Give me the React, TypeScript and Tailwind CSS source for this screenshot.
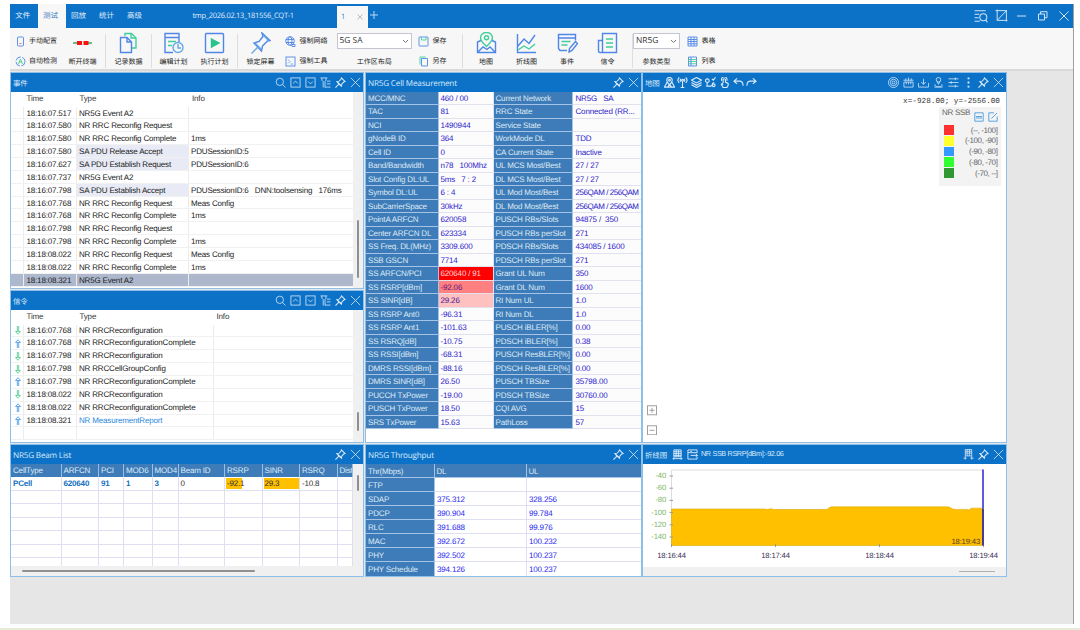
import type { ReactNode } from 'react';
import { clsx } from 'clsx';

const ICONS = {
  search: <><circle cx="10.5" cy="10.5" r="8" /><path d="M16.5 16.5 23 23" /></>,
  up: <><rect x="2" y="2" width="20" height="20" /><path d="m7 14 5-5 5 5" /></>,
  down: <><rect x="2" y="2" width="20" height="20" /><path d="m7 10 5 5 5-5" /></>,
  filter: <path d="M1 2h15M4 2v5l3 3v13M13 2v5l-2 3v13M15 9h8M15 15h8M11 22h12" />,
  pin: <><path d="m14 2 8 8-3 1-4 4-1 5L4 10l5-1 4-4z" /><path d="m9 15-8 8" /><path d="m5 11 8 8" /></>,
  close: <path d="M2 2 22 22M22 2 2 22" />,
  map: <><path d="M7 11 1 22h22L17 11M8 22l4-6 5 6" /><path d="M12 17S6 11 6 7a6 6 0 0 1 12 0c0 4-6 10-6 10z" /><circle cx="12" cy="7" r="2" /></>,
  antenna: <><path d="M5 1C1 5 1 9 5 13M19 1c4 4 4 8 0 12M8.500 4c-2 2-2 4 0 6M15.500 4c2 2 2 4 0 6" /><circle cx="12" cy="7" r="2" /><path d="M12 9v14M8 23h8" /></>,
  layers: <path d="m12 1 11 6-11 6L1 7zM1 12l11 6 11-6M1 17l11 6 11-6" />,
  route: <><circle cx="5" cy="8" r="4" /><path d="m5 12-1 8h9c5 0 1-8 7-8M15 4l3 3 5-6" /><circle cx="19" cy="18" r="3" /></>,
  hand: <path d="M9 13V5a3 3 0 0 1 5 0v6l6 3v4l-3 5H9l-4-7 2-2 2 3M6 8a6 6 0 1 1 11 0" />,
  undo: <path d="M9 3 2 9l7 6M2 9h12c6 0 8 4 8 10" />,
  redo: <path d="m15 3 7 6-7 6M22 9H10C4 9 2 13 2 19" />,
  target: <><circle cx="12" cy="12" r="11" /><circle cx="12" cy="12" r="7" /><circle cx="12" cy="12" r="3" /></>,
  ruler: <path d="M2 11h20v11H2zM1 7h22M6 3v5M12 1v7M18 3v5M7 11v5M12 11v5M17 11v5" />,
  download: <path d="M1 13v9h22v-9M12 4v12M7 11l5 5 5-5" />,
  locate: <><circle cx="12" cy="6" r="5" /><path d="m9 10 3 6 3-6M5 16c-6 7 20 7 14 0M3 22h18" /></>,
  sliders: <path d="M1 4h22M1 12h22M1 20h22M16 1v6M7 9v6M16 17v6" />,
  dots: <path d="M12 1v4M12 10v4M12 19v4" strokeWidth="4" />,
  grid: <path d="M4 2h16v15H4zM4 6h16M4 10h16M4 14h16M9 2v15M14 2v15M2 21h20M5 18l-3 3 3 2M19 18l3 3-3 2" />,
  swap: <path d="M22 9V2H2v20h20v-5M2 8h20M7 5h4M8 14h15M19 11l4 3-4 3" />,
  cursorGrid: <path d="M5 1h14v14H5zM5 5h14M5 9h14M9 1v14M14 1v14M5 15v8M19 15v8M1 20h7M16 20h7" />,
  listSearch: <><path d="M1 3h19M1 9h8M1 15h7M1 21h9" /><circle cx="16" cy="14" r="6" /><path d="m20 19 3 4" /></>,
  crop: <path d="M1 3h20v20M4 1v20h19M4 21 22 2" />,
};

type IconName = keyof typeof ICONS;

function Icon({ name, size = 11, w = 2 }: { name: IconName; size?: number; w?: number }) {
  return (
    <svg width={size} height={size} viewBox="0 0 24 24" fill="none" stroke="currentColor" strokeWidth={w} className="shrink-0">
      {ICONS[name]}
    </svg>
  );
}

function Panel({ title, left, icons, className, children }: {
  title: string;
  left?: ReactNode;
  icons: IconName[];
  className: string;
  children: ReactNode;
}) {
  return (
    <section className={clsx('flex flex-col overflow-hidden border border-[#8dbfe8] bg-white', className)}>
      <header className="flex h-[18.5px] shrink-0 items-center bg-[#0c72c8] pl-[2px] pr-[2px] text-[#dcebf9]">
        <h2 className={clsx(
          "whitespace-nowrap pt-[3.5px] font-['Open_Sans','Noto_Sans_CJK_SC',sans-serif] leading-[12px]",
          title.startsWith('NR') ? 'text-[8.1px]' : 'text-[7.5px]',
        )}
        >
          {title}
        </h2>
        {left}
        <div className="ml-auto flex items-center gap-[4px]">
          {icons.map((name) => <Icon key={name} name={name} w={name === 'pin' ? 2.2 : 1.7} />)}
        </div>
      </header>
      {children}
    </section>
  );
}

const EVENTS: [string, string, string][] = [
  ['18:16:07.517', 'NR5G Event A2', ''],
  ['18:16:07.580', 'NR RRC Reconfig Request', ''],
  ['18:16:07.580', 'NR RRC Reconfig Complete', '1ms'],
  ['18:16:07.580', 'SA PDU Release Accept', 'PDUSessionID:5'],
  ['18:16:07.627', 'SA PDU Establish Request', 'PDUSessionID:6'],
  ['18:16:07.737', 'NR5G Event A2', ''],
  ['18:16:07.798', 'SA PDU Establish Accept', 'PDUSessionID:6   DNN:toolsensing   176ms'],
  ['18:16:07.768', 'NR RRC Reconfig Request', 'Meas Config'],
  ['18:16:07.768', 'NR RRC Reconfig Complete', '1ms'],
  ['18:16:07.798', 'NR RRC Reconfig Request', ''],
  ['18:16:07.798', 'NR RRC Reconfig Complete', '1ms'],
  ['18:18:08.022', 'NR RRC Reconfig Request', 'Meas Config'],
  ['18:18:08.022', 'NR RRC Reconfig Complete', '1ms'],
  ['18:18:08.321', 'NR5G Event A2', ''],
];

const SIGNALS: ['down' | 'up', string, string][] = [
  ['down', '18:16:07.768', 'NR RRCReconfiguration'],
  ['up', '18:16:07.768', 'NR RRCReconfigurationComplete'],
  ['down', '18:16:07.798', 'NR RRCReconfiguration'],
  ['down', '18:16:07.798', 'NR RRCCellGroupConfig'],
  ['up', '18:16:07.798', 'NR RRCReconfigurationComplete'],
  ['down', '18:18:08.022', 'NR RRCReconfiguration'],
  ['up', '18:18:08.022', 'NR RRCReconfigurationComplete'],
  ['up', '18:18:08.321', 'NR MeasurementReport'],
];

const CELL: [string, string, string, string][] = [
  ['MCC/MNC', '460 / 00', 'Current Network', 'NR5G   SA'],
  ['TAC', '81', 'RRC State', 'Connected (RR...'],
  ['NCI', '1490944', 'Service State', ''],
  ['gNodeB ID', '364', 'WorkMode DL', 'TDD'],
  ['Cell ID', '0', 'CA Current State', 'Inactive'],
  ['Band/Bandwidth', 'n78   100Mhz', 'UL MCS Most/Best', '27 / 27'],
  ['Slot Config DL:UL', '5ms   7 : 2', 'DL MCS Most/Best', '27 / 27'],
  ['Symbol DL:UL', '6 : 4', 'UL Mod Most/Best', '256QAM / 256QAM'],
  ['SubCarrierSpace', '30kHz', 'DL Mod Most/Best', '256QAM / 256QAM'],
  ['PointA ARFCN', '620058', 'PUSCH RBs/Slots', '94875 /  350'],
  ['Center ARFCN DL', '623334', 'PUSCH RBs perSlot', '271'],
  ['SS Freq. DL(MHz)', '3309.600', 'PDSCH RBs/Slots', '434085 / 1600'],
  ['SSB GSCN', '7714', 'PDSCH RBs perSlot', '271'],
  ['SS ARFCN/PCI', '620640 / 91', 'Grant UL Num', '350'],
  ['SS RSRP[dBm]', '-92.06', 'Grant DL Num', '1600'],
  ['SS SINR[dB]', '29.26', 'RI Num UL', '1.0'],
  ['SS RSRP Ant0', '-96.31', 'RI Num DL', '1.0'],
  ['SS RSRP Ant1', '-101.63', 'PUSCH iBLER[%]', '0.00'],
  ['SS RSRQ[dB]', '-10.75', 'PDSCH iBLER[%]', '0.38'],
  ['SS RSSI[dBm]', '-68.31', 'PUSCH ResBLER[%]', '0.00'],
  ['DMRS RSSI[dBm]', '-88.16', 'PDSCH ResBLER[%]', '0.00'],
  ['DMRS SINR[dB]', '26.50', 'PUSCH TBSize', '35798.00'],
  ['PUCCH TxPower', '-19.00', 'PDSCH TBSize', '30760.00'],
  ['PUSCH TxPower', '18.50', 'CQI AVG', '15'],
  ['SRS TxPower', '15.63', 'PathLoss', '57'],
];

const CELL_BG: Record<string, string> = {
  'SS ARFCN/PCI': 'bg-[#ff0000] text-[#ffd8d8]',
  'SS RSRP[dBm]': 'bg-[#ff8080] text-[#5a1a80]',
  'SS SINR[dB]': 'bg-[#ffc0c0] text-[#4a2090]',
};

const THROUGHPUT: [string, string, string][] = [
  ['FTP', '', ''],
  ['SDAP', '375.312', '328.256'],
  ['PDCP', '390.904', '99.784'],
  ['RLC', '391.688', '99.976'],
  ['MAC', '392.672', '100.232'],
  ['PHY', '392.502', '100.237'],
  ['PHY Schedule', '394.126', '100.237'],
];

const LEGEND: [string, string][] = [
  ['bg-[#ff3030]', '(--, -100]'],
  ['bg-[#ffff30]', '(-100, -90]'],
  ['bg-[#3399ff]', '(-90, -80]'],
  ['bg-[#30ff30]', '(-80, -70]'],
  ['bg-[#309830]', '(-70, --]'],
];

const LOG_ICONS: IconName[] = ['search', 'up', 'down', 'filter', 'pin', 'close'];

function Arrow({ dir }: { dir: 'down' | 'up' }) {
  return dir === 'down' ? (
    <svg width="6" height="9" viewBox="0 0 6 9" fill="none" stroke="#6fd3a4" strokeWidth="1">
      <path d="M2.300 0v5M3.700 0v5M.5 5.500h5L3 8.300z" />
    </svg>
  ) : (
    <svg width="6" height="9" viewBox="0 0 6 9" fill="none" stroke="#65a9e8" strokeWidth="1">
      <path d="M.5 3.500h5L3 .7zM2.300 4v5M3.700 4v5" />
    </svg>
  );
}

function EventPanel() {
  const cols = 'grid grid-cols-[12.5px_53px_112.500px_163.5px]';
  return (
    <Panel title="事件" icons={LOG_ICONS} className="h-[217px]">
      <div className="relative flex min-h-0 flex-1 text-[#222]">
        <div className="w-[341.5px]">
          <div className={clsx(cols, 'h-[15px] items-center text-[#383838]')}>
            <span /><span className="pl-[3px]">Time</span><span className="pl-[3px]">Type</span><span className="pl-[3px]">Info</span>
          </div>
          {EVENTS.map(([time, type, info], i) => (
            <div key={i} className={clsx(cols, 'h-[12.86px] grid-rows-[11.86px] border-b border-[#f1f1f1] leading-[13.5px]', i === EVENTS.length - 1 && 'bg-[#adb8cc]')}>
              <span className="border-r border-[#ececec]" />
              <span className="border-r border-[#ececec] pl-[3px]">{time}</span>
              <span className={clsx('border-r border-[#ececec] pl-[2.5px]', type.startsWith('SA') && 'bg-[#e8eaf5]')}>{type}</span>
              <span className="whitespace-pre pl-[2px]">{info}</span>
            </div>
          ))}
        </div>
        <div className="flex-1 bg-[#f0f0f0]" />
        <div className="absolute right-[4px] top-[128px] h-[58px] w-[2px] rounded bg-[#909090]" />
      </div>
    </Panel>
  );
}

function SignalPanel() {
  const cols = 'grid grid-cols-[12.5px_53px_137px_139px]';
  return (
    <Panel title="信令" icons={LOG_ICONS} className="h-[153px]">
      <div className="relative flex min-h-0 flex-1 text-[#222]">
        <div className="w-[341.5px]">
          <div className={clsx(cols, 'h-[15px] items-center text-[#383838]')}>
            <span /><span className="pl-[3px]">Time</span><span className="pl-[3px]">Type</span><span className="pl-[3px]">Info</span>
          </div>
          {SIGNALS.map(([dir, time, type], i) => (
            <div key={i} className={clsx(cols, 'h-[12.86px] grid-rows-[11.86px] border-b border-[#f1f1f1] leading-[12.8px]')}>
              <span className="flex items-center justify-center border-r border-[#ececec] pl-[2px]"><Arrow dir={dir} /></span>
              <span className="border-r border-[#ececec] pl-[3px]">{time}</span>
              <span className={clsx('border-r border-[#ececec] pl-[2.5px]', i === 7 && 'text-[#2b87dc]')}>{type}</span>
              <span />
            </div>
          ))}
          <div className={clsx(cols, 'h-[12.86px] border-b border-[#f1f1f1]')}>
            <span className="border-r border-[#ececec]" /><span className="border-r border-[#ececec]" /><span className="border-r border-[#ececec]" />
          </div>
        </div>
        <div className="flex-1 bg-[#f0f0f0]" />
        <div className="absolute right-[4px] top-[102px] h-[19px] w-[2px] rounded bg-[#909090]" />
      </div>
    </Panel>
  );
}

function BeamPanel() {
  const cols = 'grid h-[13.55px] grid-rows-[100%] grid-cols-[50.5px_37.5px_25px_28.5px_26px_46.500px_37.500px_37.500px_37.500px_15px] leading-[13.5px]';
  const head = ['CellType', 'ARFCN', 'PCI', 'MOD6', 'MOD4', 'Beam ID', 'RSRP', 'SINR', 'RSRQ', 'Dist'];
  const row = ['PCell', '620640', '91', '1', '3', '0', '-92.1', '29.3', '-10.8', ''];
  return (
    <Panel title="NR5G Beam List" icons={['pin', 'close']} className="h-[133px]">
      <div className="relative flex min-h-0 flex-1 flex-col">
        <div className="flex min-h-0 flex-1 overflow-hidden">
          <div className="w-[341.5px] overflow-hidden">
            <div className={clsx(cols, 'bg-[#3d7cb8] text-[#dde9f5]')}>
              {head.map((h) => <span key={h} className="overflow-hidden border-r border-[#9dbde0] pl-[2px]">{h}</span>)}
            </div>
            <div className={clsx(cols, 'border-b border-[#dfdff2]')}>
              {row.map((v, i) => (
                <span key={i} className={clsx('border-r border-[#dfdff2] pl-[2px]', i < 5 ? 'font-bold text-[#1470c0]' : 'text-[#303030]')}>
                  {i === 6 && <span className="-ml-[1px] mt-[1px] block h-[11px] w-[15.500px] whitespace-nowrap bg-[#ffc000] pl-[1px] leading-[11px]">{v}</span>}
                  {i === 7 && <span className="-ml-[1px] mt-[1px] block h-[11px] bg-[#ffc000] pl-[1px] leading-[11px]">{v}</span>}
                  {i !== 6 && i !== 7 && v}
                </span>
              ))}
            </div>
            {[0, 1, 2, 3, 4, 5].map((r) => (
              <div key={r} className={clsx(cols, 'border-b border-[#dfdff2]')}>
                {row.map((_, i) => <span key={i} className="border-r border-[#dfdff2]" />)}
              </div>
            ))}
          </div>
          <div className="flex-1 bg-[#f0f0f0]" />
        </div>
        <div className="h-[10px] shrink-0 bg-[#f0f0f0]" />
        <div className="absolute right-[4px] top-[11px] h-[16px] w-[2px] rounded bg-[#909090]" />
        <div className="absolute bottom-[4px] left-[11px] h-[2px] w-[233px] rounded bg-[#909090]" />
      </div>
    </Panel>
  );
}

function CellPanel() {
  return (
    <Panel title="NR5G Cell Measurement" icons={['pin', 'close']} className="h-[371px]">
      {CELL.map(([a, av, b, bv], i) => (
        <div key={i} className="grid h-[13.5px] shrink-0 grid-cols-[72.5px_55px_79.5px_68px] grid-rows-[100%] whitespace-pre leading-[14px] text-[#2d22cc]">
          <span className="border-b border-r border-[#a4c3e6] bg-[#3d7cb8] pl-[2px] text-[#dde9f5]">{a}</span>
          <span className={clsx('border-b border-r border-[#e2e2ef] pl-[2px]', CELL_BG[a] ?? 'bg-[#fcfcfd]')}>{av}</span>
          <span className="border-b border-r border-[#a4c3e6] bg-[#3d7cb8] pl-[2px] text-[#dde9f5]">{b}</span>
          <span className={clsx('border-b border-[#e2e2ef] bg-[#fcfcfd] pl-[2.5px]', bv.startsWith('256') && 'tracking-[-0.45px]')}>{bv}</span>
        </div>
      ))}
    </Panel>
  );
}

function ThroughputPanel() {
  const cols = 'grid h-[14.15px] shrink-0 grid-cols-[68.5px_92px_115px] grid-rows-[100%] leading-[15px]';
  return (
    <Panel title="NR5G Throughput" icons={['pin', 'close']} className="h-[133px]">
      <div className={clsx(cols, 'bg-[#3d7cb8] text-[#dde9f5]')}>
        {['Thr(Mbps)', 'DL', 'UL'].map((h) => <span key={h} className="border-b border-r border-[#a4c3e6] pl-[2px]">{h}</span>)}
      </div>
      {THROUGHPUT.map(([k, dl, ul]) => (
        <div key={k} className={clsx(cols, 'text-[#2a2af0]')}>
          <span className="border-b border-r border-[#a4c3e6] bg-[#3d7cb8] pl-[2px] text-[#dde9f5]">{k}</span>
          <span className="border-b border-r border-[#dfdff2] pl-[2.5px]">{dl}</span>
          <span className="border-b border-[#dfdff2] pl-[2.5px]">{ul}</span>
        </div>
      ))}
    </Panel>
  );
}

function MapPanel() {
  const tools: IconName[] = ['map', 'antenna', 'layers', 'route', 'hand', 'undo', 'redo'];
  return (
    <Panel
      title="地图"
      left={<div className="ml-[4px] flex gap-[2.8px]">{tools.map((t) => <Icon key={t} name={t} w={2.4} />)}</div>}
      icons={['target', 'ruler', 'download', 'locate', 'sliders', 'dots', 'pin', 'close']}
      className="h-[371px]"
    >
      <div className="flex flex-1 flex-col items-end text-[#333]">
        <p className="mr-[6px] mt-[5px] h-[10px] whitespace-pre font-['Liberation_Mono',monospace] text-[7.7px] leading-[11px] tracking-normal">x=-928.00; y=-2556.00</p>
        <div className="mr-[5px] h-[79px] w-[62px] bg-[#f3f3f3] text-[#666]">
          <div className="flex h-[17px] items-start pl-[3px]">
            <span className="leading-[12px] tracking-[-0.3px]">NR SSB</span>
            <div className="ml-auto mr-[3.500px] mt-[5px] flex gap-[4px]">
              <svg width="10" height="10" viewBox="0 0 10 10" fill="none" stroke="#5aa5e2"><path d="M.8.8h8.400v8.400H.8zM2 4.500h6M2 6h6" /></svg>
              <svg width="10" height="10" viewBox="0 0 10 10" fill="none" stroke="#5aa5e2"><path d="M6 .8H.8v8.400h8.400V4.500M3.500 6.500 9 1" /></svg>
            </div>
          </div>
          <ul className="mr-[3.5px] mt-[1px] tracking-[-0.4px]">
            {LEGEND.map(([color, text]) => (
              <li key={text} className="flex h-[10.8px] items-center pl-[5px] leading-[10.8px]">
                <span className={clsx('h-[9.800px] w-[9.500px]', color)} />
                <span className="ml-auto pt-[2px]">{text}</span>
              </li>
            ))}
          </ul>
        </div>
        <div className="mb-[7px] ml-[4px] mt-auto flex flex-col gap-[9px] self-start">
          {['M2.500 5h5M5 2.500v5', 'M2.500 5h5'].map((d) => (
            <svg key={d} width="10" height="10.500" viewBox="0 0 10 10" fill="none" stroke="#a0a0a0"><path d={d} /><rect x=".5" y=".5" width="9" height="9" /></svg>
          ))}
        </div>
      </div>
    </Panel>
  );
}

function ChartPanel() {
  return (
    <Panel
      title="折线图"
      left={
        <div className="ml-[5px] flex items-center gap-[3.5px]">
          <Icon name="grid" /><Icon name="swap" />
          <span className="text-[7.2px] tracking-[-0.32px]">NR SSB RSRP[dBm]:-92.06</span>
        </div>
      }
      icons={['cursorGrid', 'pin', 'close']}
      className="h-[133px]"
    >
      <svg width="363" height="103.500" viewBox="643 463.500 363 103.500" fontSize="7.700" className="block shrink-0">
        <path d="M671.500 545V469.500H983" fill="none" stroke="#dcdcdc" />
        <path d="M671.500 545V508.500H765l2 .5 4-.8 3 .8h50q4 0 5-1.500t5-1.200H946q4 0 5 1.300t5 1.300h12l1 .8 2-2H983V545z" fill="#ffc000" stroke="#dba800" strokeWidth=".6" />
        {[-40, -60, -80, -100, -120, -140].map((v, i) => (
          <g key={v}>
            <text x="666" y={477.2 + i * 12.3} textAnchor="end" fill="#80b868">{v}</text>
            <path d={`M669.500 ${475.5 + i * 12.2}h3.500`} stroke="#999" />
          </g>
        ))}
        {['18:16:44', '18:17:44', '18:18:44', '18:19:44'].map((t, i) => (
          <g key={t}>
            <text x={671.5 + i * 104} y="557.2" textAnchor="middle" fill="#3a3050">{t}</text>
            <path d={`M${671.5 + i * 104} 543.500v3`} stroke="#999" />
          </g>
        ))}
        <path d="M983 469v39" stroke="#5c5cdc" strokeWidth="2" />
        <path d="M983 508v37" stroke="#4a3c90" strokeWidth="2" />
        <text x="980" y="543" textAnchor="end" fill="#5a3a28">18:19:43</text>
      </svg>
      <div className="flex flex-1 items-center justify-end bg-[#f0f0f0] pr-[11px]">
        <div className="h-[1.500px] w-[36px] bg-[#b0b0b0]" />
      </div>
    </Panel>
  );
}

// Ribbon pieces

const B = '#4f86e8';
const G = '#3fcf9a';

function Small({ icon, children }: { icon: ReactNode; children: ReactNode }) {
  return (
    <div className="flex h-[20px] items-center gap-[3.5px]">
      <svg width="11" height="11" viewBox="0 0 22 22" fill="none" stroke={B} strokeWidth="1.8" className="shrink-0">{icon}</svg>
      <span className="whitespace-nowrap">{children}</span>
    </div>
  );
}

function Big({ label, className, icon }: { label: string; className: string; icon: ReactNode }) {
  return (
    <div className={clsx('flex shrink-0 flex-col items-center', className)}>
      <svg width="21" height="22" viewBox="0 0 21 22" fill="none" stroke={B} strokeWidth="1.400" className="mt-[4px]">{icon}</svg>
      <span className="mt-[2px] whitespace-nowrap leading-[12px]">{label}</span>
    </div>
  );
}

const Sep = () => <div className="mt-[6px] h-[34px] w-px shrink-0 bg-[#dedede]" />;

function Select({ value, label, className }: { value: string; label: string; className: string }) {
  return (
    <div className={clsx('flex shrink-0 flex-col items-center pt-[5px]', className)}>
      <div className="flex h-[16px] w-full items-center justify-between border border-[#c4c4d2] bg-white px-[2px] font-['Open_Sans',sans-serif] text-[8.4px] text-[#333]">
        <span className="pt-[1.5px]">{value}</span>
        <svg width="7" height="5" viewBox="0 0 7 5" fill="none" stroke="#777"><path d="m1 1 2.500 2.500L6 1" /></svg>
      </div>
      <span className="mt-[7px] whitespace-nowrap leading-[12px]">{label}</span>
    </div>
  );
}

function Ribbon() {
  return (
    <div className="flex h-[43px] shrink-0 border-b-2 border-[#d9d9d9] bg-[#f7f7f7] font-['Noto_Sans_CJK_SC',sans-serif] text-[7px] font-normal tracking-normal text-[#222]">
      <div className="w-[50px] shrink-0 pl-[4.500px] pt-[3px]">
        <Small icon={<><rect x="5" y="2" width="12" height="18" rx="2" /><path d="M9 15h4" stroke="#e06060" /></>}>手动配置</Small>
        <Small icon={<><circle cx="11" cy="11" r="9" strokeDasharray="12 3" /><path d="m7 16 4-10 4 10M8.500 12h5" stroke={G} /></>}>自动检测</Small>
      </div>
      <Big label="断开终端" className="w-[45px]" icon={<><path d="M1 11h5M15 11h5" stroke="#30b070" /><path d="M5 11h5M11.500 11h5" stroke="#ff1010" strokeWidth="4" /></>} />
      <Sep />
      <Big label="记录数据" className="w-[45px]" icon={<><path d="M7 4V1.500h6.500L18 6v10h-4M13 1.500V6h5" stroke={G} /><path d="M2.500 5.500H9l4.500 4.500v10.500h-11zM9 5.500V10h4" /></>} />
      <Sep />
      <Big label="编辑计划" className="w-[43px]" icon={<><path d="M10 20.500H2v-19h14v9M2 5.500h14" /><path d="M5 9.500h8M5 13.500h4" stroke={G} strokeWidth="1.700" /><circle cx="15" cy="15.500" r="5" stroke="#65a9e8" /><path d="M15 12v4h3" stroke="#65a9e8" /></>} />
      <Big label="执行计划" className="w-[39px]" icon={<><rect x="1.500" y="1.500" width="18" height="19" rx="1" /><path d="m7.500 7 7.500 4-7.500 4z" fill="#28c48c" stroke="#28c48c" /></>} />
      <div className="w-[3px] shrink-0" />
      <Sep />
      <Big label="锁定屏幕" className="w-[45px]" icon={<><path d="m12 1 8 7.500-2.500.5-5 5-1 5L4 11l5-1.500 4-5z" /><path d="m8 15-6.500 6.500M13 3l5 5M5 11l6 6" stroke="#65a9e8" /></>} />
      <div className="w-[53.5px] shrink-0 pl-[2px] pt-[3px]">
        <Small icon={<><circle cx="10" cy="10" r="8.500" /><ellipse cx="10" cy="10" rx="4" ry="8.500" /><path d="M2 7h16M2 13h16M14 17h6v4h-6z" /></>}>强制网络</Small>
        <Small icon={<><rect x="2" y="2" width="18" height="18" /><path d="m6 7 4 4-4 4M11 16h5" stroke="#65a9e8" /></>}>强制工具</Small>
      </div>
      <Select value="5G SA" label="工作区布局" className="w-[75.5px]" />
      <div className="w-[50px] shrink-0 pl-[6px] pt-[3px]">
        <Small icon={<><rect x="2" y="2" width="18" height="18" rx="1" /><path d="M7 2v6h9V2" stroke={G} /></>}>保存</Small>
        <Small icon={<><path d="M7 5h12v15H7z" /><path d="M4 17V2h11" stroke={G} /></>}>另存</Small>
      </div>
      <Sep />
      <div className="w-[3px] shrink-0" />
      <Big label="地图" className="w-[40px]" icon={<><path d="M5 8.500 1.500 10v10.500h18V10L16 8.500M2 20l5-5 4 2.500 3-2.500 5 5" /><path d="M10.500 14.500S4.500 9 4.500 5.800a6 5.300 0 0 1 12 0c0 3.200-6 8.700-6 8.700z" stroke={G} /><circle cx="10.500" cy="5.800" r="2" stroke={G} /></>} />
      <Big label="折线图" className="w-[41px]" icon={<><path d="M1.500 2v18.500H20" /><path d="m2 14 6-7 5 4.500L19 3" /><path d="m2 18 6-4 5 3 6-5" stroke={G} /></>} />
      <Big label="事件" className="w-[40px]" icon={<><path d="M10 18.500H3l-1.500-2v-14h17v6M1.500 6h17" /><path d="M4.500 9.500h9M4.500 13h6" stroke={G} /><path d="m12 20 .5-3.500 6-7 2 2-5.500 7z" /></>} />
      <Big label="信令" className="w-[41px]" icon={<><path d="M5.500 20.500v-19h14v19H3q-1.500 0-1.500-2V8.500h4" /><path d="M9 7h7M9 11h7M9 15h7" stroke={G} /></>} />
      <div className="w-[4px] shrink-0" />
      <Sep />
      <Select value="NR5G" label="参数类型" className="w-[47px]" />
      <div className="shrink-0 pl-[7px] pt-[3px]">
        <Small icon={<path d="M2 2h18v18H2zM2 7h18M2 11h18M2 15.500h18M8 2v18M14 2v18" />}>表格</Small>
        <Small icon={<><path d="M3 2h16v18H3z" /><path d="M3 7h16M3 11h16M3 15.500h16" stroke={G} /><path d="M8 2v18" /></>}>列表</Small>
      </div>
    </div>
  );
}

function TitleBar() {
  return (
    <div className="flex h-[24px] shrink-0 items-stretch bg-[#0c72c8] font-['Open_Sans','Noto_Sans_CJK_SC',sans-serif] text-[7.5px] leading-[25px] tracking-normal text-[#e0edf9]">
      {['文件', '测试', '回放', '统计', '高级'].map((t) => (
        <span key={t} className={clsx('shrink-0 pr-[2px] text-center', t === '文件' ? 'w-[27.5px]' : 'w-[28px]', t === '测试' && 'bg-[#f7f7f7] text-[#3a7cc0]')}>{t}</span>
      ))}
      <span className="ml-[43px] w-[144.5px] shrink-0 tracking-[-0.3px]">tmp_2026.02.13_181556_CQT-1</span>
      <div className="mt-[2px] flex w-[31px] shrink-0 items-center justify-between bg-[#f7f7f7] pl-[4px] pr-[5px] leading-[20px] text-[#3a7cc0]">
        <span>1</span>
        <svg width="6" height="6" viewBox="0 0 6 6" stroke="#bbb"><path d="m.5.500 5 5M5.500.5l-5 5" /></svg>
      </div>
      <svg width="8" height="8" viewBox="0 0 8 8" stroke="#b9d6f0" className="ml-[2px] mt-[7px]"><path d="M4 0v8M0 4h8" /></svg>
      <div className="ml-auto flex items-center gap-[9px] pr-[4.5px] text-[#cfe3f6]">
        <div className="flex gap-[7px]"><Icon name="listSearch" size={14} w={1.8} /><Icon name="crop" size={13} w={1.8} /></div>
        <svg width="10" height="10" viewBox="0 0 10 10" stroke="currentColor"><path d="M0 5h9" /></svg>
        <svg width="10" height="10" viewBox="0 0 10 10" fill="none" stroke="currentColor" className="ml-[2px]"><path d="M.5 3h6v6h-6zM2.500 3V.7H9v6H6.500" /></svg>
        <svg width="10" height="10" viewBox="0 0 10 10" stroke="currentColor" className="ml-[2px]"><path d="m.5.500 9 9M9.500.5l-9 9" /></svg>
      </div>
    </div>
  );
}

export default function App() {
  return (
    <div className="flex h-[630px] w-[1080px] flex-col overflow-hidden bg-white pl-[10px] pt-[4px] font-['Liberation_Sans','Noto_Sans_CJK_SC',sans-serif] text-[8px] tracking-[-0.17px] [text-rendering:geometricPrecision]">
      <div className="flex h-[620px] w-[1064px] shrink-0 flex-col border-r border-[#a0a0a0] bg-[#e6e6e6]">
        <TitleBar />
        <Ribbon />
        <main className="mt-[1px] flex items-start">
          <div className="mr-px flex w-[354px] flex-col gap-px">
            <EventPanel />
            <SignalPanel />
            <BeamPanel />
          </div>
          <div className="flex w-[277px] flex-col gap-px">
            <CellPanel />
            <ThroughputPanel />
          </div>
          <div className="flex w-[365px] flex-col gap-px">
            <MapPanel />
            <ChartPanel />
          </div>
        </main>
      </div>
      <div className="-ml-[10px] mt-auto h-[2px] shrink-0 bg-[#e6ebd8]" />
    </div>
  );
}
